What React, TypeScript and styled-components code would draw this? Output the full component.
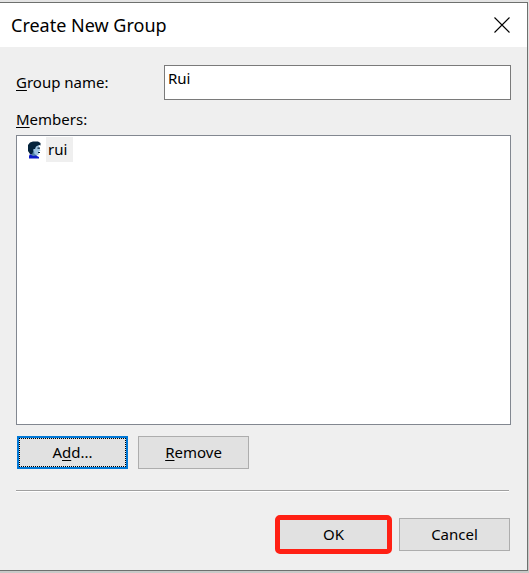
import React, { useState } from "react";
import styled, { createGlobalStyle, css } from "styled-components";

const GlobalStyle = createGlobalStyle`
  * { box-sizing: border-box; }
  html, body, #root { height: 100%; }
  body {
    margin: 0;
    background: #d2d4d2;
    color: #000;
    font: 15px/24px "Noto Sans", "Open Sans", sans-serif;
  }
  button, input { font: inherit; color: inherit; }
`;

const Desktop = styled.div`
  min-height: 100%;
  display: flex;
  padding: 2px 1px 2px 0;
  background: linear-gradient(#e4e4e4, #d6d6d6 50%, #c8cac8);
`;

const Dialog = styled.form`
  flex: 1;
  display: flex;
  flex-direction: column;
  background: #efefef;
  border: 1px solid #6e706e;
  border-left: 0;
`;

const TitleBar = styled.header`
  display: flex;
  align-items: center;
  justify-content: space-between;
  height: 44px;
  padding: 0 9px 0 11px;
  background: #fff;
`;

const Title = styled.h1`
  margin: 0;
  font-size: 18px;
  line-height: 28px;
  font-weight: 400;
`;

const CloseButton = styled.button`
  display: flex;
  align-items: center;
  justify-content: center;
  width: 32px;
  height: 32px;
  padding: 0;
  border: 0;
  background: none;
`;

const Body = styled.main`
  flex: 1;
  display: flex;
  flex-direction: column;
  padding: 18px 16px 19px;
`;

const Field = styled.div`
  display: grid;
  grid-template-columns: 148px 1fr;
  align-items: center;
`;

const Label = styled.label`
  padding-bottom: 2px;
  white-space: nowrap;
`;

const TextBox = styled.input`
  width: 100%;
  min-width: 0;
  height: 35px;
  padding: 0 3px 10px;
  border: 1px solid #7a7a7a;
  border-radius: 0;
  background: #fff;
  outline: 0;
`;

const MembersHeading = styled.div`
  padding: 7px 0 4px;
`;

const MemberList = styled.ul`
  flex: 1;
  min-height: 120px;
  margin: 0;
  padding: 1px 10px;
  list-style: none;
  background: #fff;
  border: 1px solid #828790;
`;

const Member = styled.li`
  display: flex;
  align-items: center;
  gap: 4px;
  height: 25px;
`;

const MemberName = styled.span`
  padding: 0 6px 1px 2px;
  background: #efefef;
`;

const Actions = styled.div<{ $end?: boolean }>`
  display: flex;
  gap: 10px;
  padding: 11px 1px 0;
  justify-content: ${(p) => (p.$end ? "flex-end" : "flex-start")};
`;

const PushButton = styled.button<{ $focused?: boolean; $marked?: boolean }>`
  width: 111px;
  height: 33px;
  padding: 0 0 2px;
  border: 1px solid #adadad;
  border-radius: 0;
  background: #e1e1e1;
  ${(p) =>
    p.$focused &&
    css`
      border: 2px solid #0078d7;
      outline: 1px dotted #000;
      outline-offset: -3px;
    `}
  ${(p) =>
    p.$marked &&
    css`
      border-radius: 2px;
      outline: 5px solid #ff2014;
      outline-offset: -2px;
    `}
`;

const Divider = styled.hr`
  align-self: stretch;
  margin: 21px 2px 15px 0;
  border: 0;
  border-top: 1px solid #a0a0a0;
  border-bottom: 1px solid #fff;
`;

const Key = styled.u`
  text-underline-offset: 2px;
  text-decoration-thickness: 1px;
  text-decoration-skip-ink: none;
`;

const UserIcon = () => (
  <svg width="15" height="18" viewBox="0 0 15 18" aria-hidden="true">
    <path fill="#9ec4e0" d="M6 4.500 12 3v4l1.500 2.500-1.500.8v3l-1.500 1H8.500L8 16H4.500L4 11z" />
    <path fill="#5284a8" d="M5 9l2 1 .5 3L10 14.500 8 16H4.500z" />
    <path fill="#04233c" d="M3 1.500 6 .5h5l2.500 1.500v2.500L12 4 9 5.500 8 8H6.500L6 11l-1 2.500-2-.5L1 10V4z" />
    <path fill="#04233c" d="M10.500 6.500H13v1.200h-2.500zM11 11h2v1h-2z" />
    <path fill="#0c1cc8" d="M3 13 6 15l3-.5 3 1.500v1.500H2V15z" />
  </svg>
);

const CloseIcon = () => (
  <svg width="16" height="16" viewBox="0 0 16 16" aria-hidden="true">
    <path d="M.5.5l15 15M15.500.5l-15 15" stroke="#000" strokeWidth="1.1" fill="none" />
  </svg>
);

export default function App() {
  const [name, setName] = useState("Rui");
  return (
    <>
      <GlobalStyle />
      <Desktop>
        <Dialog onSubmit={(e: React.FormEvent) => e.preventDefault()}>
          <TitleBar>
            <Title>Create New Group</Title>
            <CloseButton type="button" aria-label="Close">
              <CloseIcon />
            </CloseButton>
          </TitleBar>
          <Body>
            <Field>
              <Label htmlFor="group-name">
                <Key>G</Key>roup name:
              </Label>
              <TextBox id="group-name" value={name} onChange={(e) => setName(e.target.value)} />
            </Field>
            <MembersHeading id="members-heading">
              <Key>M</Key>embers:
            </MembersHeading>
            <MemberList aria-labelledby="members-heading">
              <Member>
                <UserIcon />
                <MemberName>rui</MemberName>
              </Member>
            </MemberList>
            <Actions>
              <PushButton type="button" $focused>
                A<Key>d</Key>d...
              </PushButton>
              <PushButton type="button">
                <Key>R</Key>emove
              </PushButton>
            </Actions>
            <Divider />
            <Actions $end>
              <PushButton type="submit" $marked>
                OK
              </PushButton>
              <PushButton type="button">Cancel</PushButton>
            </Actions>
          </Body>
        </Dialog>
      </Desktop>
    </>
  );
}
